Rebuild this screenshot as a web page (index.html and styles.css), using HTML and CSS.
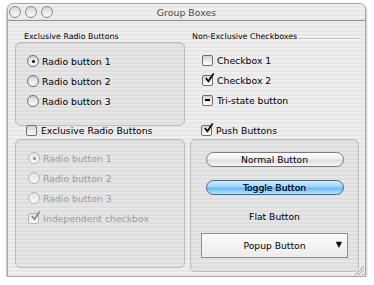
FILE: index.html
```html
<!DOCTYPE html>
<html lang="en">
<head>
    <meta charset="UTF-8">
    <meta name="viewport" content="width=device-width, initial-scale=1.0">
    <title>Group Boxes</title>
    <link rel="stylesheet" href="styles.css">
</head>
<body>
    <div class="window">
        <div class="titlebar">
            <div class="lights">
                <span class="light"></span>
                <span class="light"></span>
                <span class="light"></span>
            </div>
            <div class="title">Group Boxes</div>
        </div>

        <div class="content">
            <section class="group">
                <div class="group-title">Exclusive Radio Buttons</div>
                <div class="group-box">
                    <div class="row"><span class="radio checked"></span>Radio button 1</div>
                    <div class="row"><span class="radio"></span>Radio button 2</div>
                    <div class="row"><span class="radio"></span>Radio button 3</div>
                </div>
            </section>

            <section class="group">
                <div class="group-title line">Non-Exclusive Checkboxes</div>
                <div class="group-plain">
                    <div class="row"><span class="check"></span>Checkbox 1</div>
                    <div class="row">
                        <span class="check">
                            <svg viewBox="0 0 12 12"><path d="M2 5.5 L4.8 9 L10.5 0.5" /></svg>
                        </span>Checkbox 2
                    </div>
                    <div class="row"><span class="check"><i class="dash"></i></span>Tri-state button</div>
                </div>
            </section>

            <section class="group">
                <div class="group-head"><span class="check"></span>Exclusive Radio Buttons</div>
                <div class="group-box tall disabled">
                    <div class="row"><span class="radio checked"></span>Radio button 1</div>
                    <div class="row"><span class="radio"></span>Radio button 2</div>
                    <div class="row"><span class="radio"></span>Radio button 3</div>
                    <div class="row">
                        <span class="check">
                            <svg viewBox="0 0 12 12"><path d="M2 5.5 L4.8 9 L10.5 0.5" /></svg>
                        </span>Independent checkbox
                    </div>
                </div>
            </section>

            <section class="group">
                <div class="group-head">
                    <span class="check">
                        <svg viewBox="0 0 12 12"><path d="M2 5.5 L4.8 9 L10.5 0.5" /></svg>
                    </span>Push Buttons
                </div>
                <div class="group-box tall buttons">
                    <button class="pill">Normal Button</button>
                    <button class="pill toggle">Toggle Button</button>
                    <button class="flat">Flat Button</button>
                    <button class="popup">Popup Button<span class="arrow">&#9660;</span></button>
                </div>
            </section>
        </div>

        <div class="grip"></div>
    </div>
</body>
</html>
```

FILE: styles.css
```css
body {
    margin: 0;
    background-color: #fff;
    font-family: 'DejaVu Sans', sans-serif;
    font-size: 9.3px;
    color: #000;
}

.window {
    position: relative;
    margin: 3px 0 0 7px;
    width: 357px;
    height: 272px;
    border: 1px solid #a6a6a6;
    border-radius: 6px 6px 0 0;
    background: repeating-linear-gradient(to bottom, #efefef 0, #efefef 2px, #e7e7e7 2px, #e7e7e7 4px);
    box-shadow: 0 2px 3px rgba(0, 0, 0, 0.45);
}

.titlebar {
    position: relative;
    height: 16px;
    border-bottom: 1px solid #8c8c8c;
    display: flex;
    align-items: center;
}

.lights {
    display: flex;
    gap: 4px;
    margin-left: 1px;
}

.light {
    width: 10px;
    height: 10px;
    border: 1px solid #8a8a8a;
    border-radius: 50%;
    background: linear-gradient(#d8d8d8, #fafafa);
}

.title {
    position: absolute;
    left: 0;
    right: 0;
    text-align: center;
    color: #4a4a4a;
    font-size: 9.4px;
}

.content {
    display: grid;
    grid-template-columns: 170px 169px;
    grid-template-rows: 87px 150px;
    column-gap: 5px;
    padding: 10px 0 0 7px;
}

.group-title {
    font-size: 7.9px;
    height: 11px;
    line-height: 11px;
    padding-left: 9px;
}

.group-title.line {
    display: flex;
    align-items: center;
    gap: 2px;
    padding-left: 2px;
}

.group-title.line::after {
    content: '';
    flex: 1;
    height: 1px;
    margin-top: 4px;
    background-color: #c4c4c4;
    border-bottom: 1px solid #fafafa;
}

.group-box {
    height: 74px;
    padding: 8px 0 0 11px;
    border: 1px solid #bdbdbd;
    border-radius: 5px;
    background-color: rgba(0, 0, 0, 0.035);
    box-shadow: inset 0 1px 2px rgba(0, 0, 0, 0.06);
}

.group-box.tall {
    height: 119px;
    padding-left: 12px;
}

.group-plain {
    padding: 8px 0 0 12px;
}

.row {
    display: flex;
    align-items: center;
    height: 20px;
    gap: 3px;
}

.radio {
    width: 10px;
    height: 10px;
    border: 1px solid #6e6e6e;
    border-radius: 50%;
    background: linear-gradient(#d0d0d0, #ffffff);
    display: flex;
    align-items: center;
    justify-content: center;
}

.radio.checked::after {
    content: '';
    width: 3px;
    height: 3px;
    border-radius: 50%;
    background-color: #111;
}

.check {
    width: 9px;
    height: 9px;
    border: 1px solid #6e6e6e;
    border-radius: 2px;
    background: linear-gradient(#d4d4d4, #ffffff);
    display: flex;
    align-items: center;
    justify-content: center;
    position: relative;
    margin-right: 1px;
}

.check svg {
    position: absolute;
    left: 1px;
    top: -3px;
    width: 11px;
    height: 11px;
    fill: none;
    stroke: #000;
    stroke-width: 1.8;
}

.dash {
    width: 5px;
    height: 2px;
    background-color: #000;
}

.group-head {
    display: flex;
    align-items: center;
    gap: 3px;
    height: 14px;
    margin: 5px 0 2px 11px;
}

.disabled {
    color: #9a9a9a;
}

.disabled .radio,
.disabled .check {
    border-color: #b4b4b4;
    background: linear-gradient(#e2e2e2, #f8f8f8);
}

.disabled .radio.checked::after {
    background-color: #8a8a8a;
}

.disabled .check svg {
    stroke: #8a8a8a;
}

.group-box.buttons {
    padding: 12px 0 0 0;
    display: flex;
    flex-direction: column;
    align-items: center;
}

button {
    font-family: 'DejaVu Sans', sans-serif;
    font-size: 9.2px;
    color: #000;
    cursor: pointer;
    padding: 0;
}

.pill {
    width: 138px;
    height: 15px;
    border: 1px solid #7a7a7a;
    border-radius: 8px;
    background: linear-gradient(#ffffff 0%, #f0f0f0 45%, #dedede 55%, #f8f8f8 100%);
}

.toggle {
    margin-top: 13px;
    border-color: #41689a;
    background: linear-gradient(#d2ecff 0%, #9ed3fa 45%, #6bbaf4 55%, #b5e2ff 100%);
    color: #0c1c30;
    text-shadow: 0 0 0.6px #0c1c30;
}

.flat {
    margin-top: 13px;
    border: none;
    background: none;
    height: 17px;
}

.popup {
    position: relative;
    margin-top: 8px;
    width: 147px;
    height: 25px;
    border: 1px solid #8e8e8e;
    background: linear-gradient(#fbfbfb, #ececec);
}

.arrow {
    position: absolute;
    right: 5px;
    top: 6px;
    font-size: 8px;
}

.grip {
    position: absolute;
    right: 1px;
    bottom: 1px;
    width: 9px;
    height: 9px;
    background: linear-gradient(135deg, transparent 0 45%, #9a9a9a 45% 52%, transparent 52% 65%, #9a9a9a 65% 72%, transparent 72% 85%, #9a9a9a 85% 92%, transparent 92%);
}
```
